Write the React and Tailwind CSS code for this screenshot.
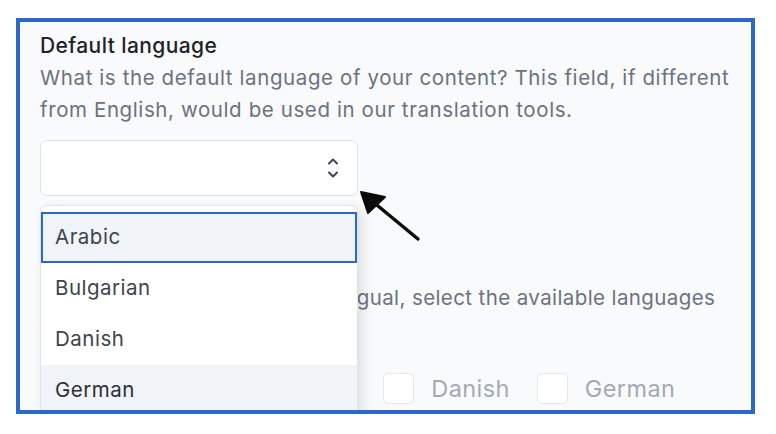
import React from "react";

const options = ["Arabic", "Bulgarian", "Danish", "German", "English"];
const checks = ["Arabic", "Bulgarian", "Danish", "German"];

function UpDown() {
  return (
    <svg width="12" height="22" viewBox="0 0 12 22" fill="none" stroke="#3f4652" strokeWidth="2" strokeLinecap="round" strokeLinejoin="round">
      <path d="M2 6.5 6 2.5 10 6.5" />
      <path d="M2 15.5 6 19.5 10 15.5" />
    </svg>
  );
}

export default function App() {
  return (
    <div className="relative w-[776px] h-[434px] bg-white overflow-hidden" style={{ fontFamily: "Inter, 'Noto Sans', sans-serif" }}>
      <div className="ml-[16px] mt-[18px] w-[739px] h-[396px] border-[4px] border-[#2f67c9] bg-[#f9fafc] overflow-hidden relative pl-[20px] pt-[12px]">
        <div className="text-[21px] leading-[24px] font-medium tracking-[0.4px] text-[#1f2328]">Default language</div>
        <p className="mt-[4px] text-[20.5px] leading-[32px] tracking-[0.6px] text-[#6b7280] w-[700px]">
          What is the default language of your content? This field, if different from English, would be used in our translation tools.
        </p>
        <div className="mt-[14px] w-[318px] h-[56px] bg-white border border-[#dfe3ea] rounded-[7px] flex items-center justify-end pr-[18px]">
          <UpDown />
        </div>

        {/* section behind the open list */}
        <div className="mt-[58px] text-[21px] leading-[24px] font-medium tracking-[0.4px] text-[#1f2328]">Multilingual</div>
        <p className="mt-[4px] indent-[11px] text-[20.5px] leading-[32px] tracking-[0.4px] text-[#6b7280] w-[700px]">
          If your content is to be multilingual, select the available languages for your content.
        </p>
        <div className="mt-[25px] flex items-center gap-[27px] pl-[11px]">
          {checks.map((c) => (
            <div key={c} className="flex items-center gap-[17px]">
              <div className="w-[31px] h-[31px] bg-white border border-[#e3e7ee] rounded-[5px]" />
              <span className="text-[23.5px] tracking-[0.4px] text-[#a3aab5]">{c}</span>
            </div>
          ))}
        </div>

        {/* open option list */}
        <div className="absolute left-[20px] top-[183px] w-[318px] h-[240px] bg-white border border-[#dfe3ea] rounded-t-[7px] shadow-[4px_4px_12px_rgba(0,0,0,0.12)] pt-[6px]">
          {options.map((o, i) => (
            <div
              key={o}
              className={
                i === 0
                  ? "h-[51px] flex items-center pl-[12px] border-2 border-[#2f67c9] bg-[#f0f3f7] text-[20.5px] tracking-[0.5px] text-[#3d434d]"
                  : i === 3
                  ? "h-[51px] flex items-center pl-[14px] bg-[#f0f3f7] text-[20.5px] tracking-[0.5px] text-[#2b3038]"
                  : "h-[51px] flex items-center pl-[14px] text-[20.5px] tracking-[0.5px] text-[#3d434d]"
              }
            >
              {o}
            </div>
          ))}
        </div>
      </div>

      {/* pointer arrow */}
      <svg className="absolute left-0 top-0" width="776" height="434" viewBox="0 0 776 434">
        <line x1="418" y1="239" x2="372" y2="201" stroke="#0b0b0b" strokeWidth="3.5" strokeLinecap="round" />
        <polygon points="361,192 385,197 368,213" fill="#0b0b0b" stroke="#0b0b0b" strokeWidth="2" strokeLinejoin="round" />
      </svg>
    </div>
  );
}
